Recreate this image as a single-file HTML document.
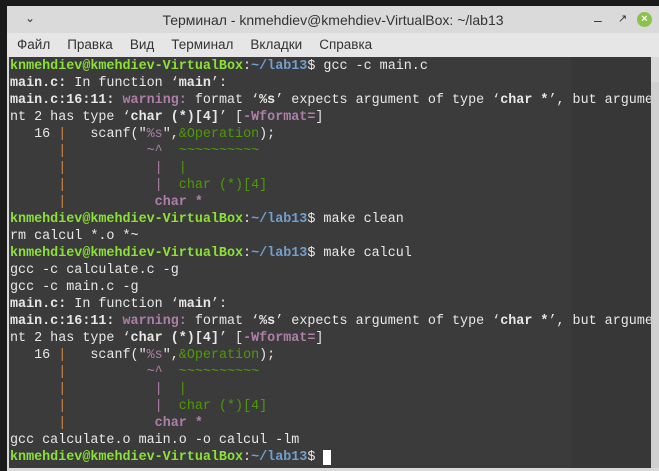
<!DOCTYPE html>
<html><head><meta charset="utf-8"><style>
body{margin:0;width:659px;height:471px;background:#1a1a1a;overflow:hidden;position:relative;font-family:"Liberation Sans",sans-serif}
#win{position:absolute;left:7px;top:6px;width:652px;height:465px;background:#d9d9d9}
#title{position:absolute;left:0;top:0;width:652px;height:27px;background:#dadada;font-size:14px;color:#333;text-align:center;line-height:28px}
#menu{position:absolute;left:0;top:27px;width:652px;height:24px;background:#e6e6e6;font-size:13.5px;color:#333;line-height:24px}
#menu span{margin-left:10px;margin-right:7px}
#term{position:absolute;left:2px;top:51px;width:642px;height:411px;background:#3b3b3b;overflow:hidden}
#side{position:absolute;left:562px;top:0;width:80px;height:411px;background:#373737}
#sb{position:absolute;left:644px;top:76px;width:8px;height:386px;background:#d0d0d0}
pre{position:absolute;left:1px;top:1px;margin:0;font-family:"Liberation Mono",monospace;font-size:13.4px;line-height:17px;color:#e8e8e8;white-space:pre}
.g{color:#8ae234;font-weight:bold}.b{color:#729fcf;font-weight:bold}.w{font-weight:bold}
.p{color:#ad7fa8;font-weight:bold}.pp{color:#ad7fa8}.o{color:#d0884a}.f{color:#4e9a06}
.cur{background:#fff;color:#fff}
</style></head><body>
<div id="win">
<div id="title"><span style="position:absolute;left:18px;top:-2px;font-size:12px">&#8964;</span>Терминал - knmehdiev@kmehdiev-VirtualBox: ~/lab13
<span style="position:absolute;left:587px;top:0">–</span>
<span style="position:absolute;left:611px;top:-1px;font-size:11px">&#8599;</span>
<span style="position:absolute;left:630px;top:6px;width:15px;height:15px;border-radius:50%;background:#8bc34a;color:#fff;font-size:11px;line-height:15px;font-weight:bold">×</span></div>
<div id="menu"><span>Файл</span><span>Правка</span><span>Вид</span><span>Терминал</span><span>Вкладки</span><span>Справка</span></div>
<div id="term"><div id="side"></div>
<pre><span class="g">knmehdiev@kmehdiev-VirtualBox</span>:<span class="b">~/lab13</span>$ gcc -c main.c
<span class="w">main.c:</span> In function ‘<span class="w">main</span>’:
<span class="w">main.c:16:11:</span> <span class="p">warning: </span>format ‘<span class="w">%s</span>’ expects argument of type ‘<span class="w">char *</span>’, but argume
nt 2 has type ‘<span class="w">char (*)[4]</span>’ [<span class="p">-Wformat=</span>]
   16 <span class="o">|</span>   scanf("<span class="pp">%s</span>",<span class="f">&amp;Operation</span>);
      <span class="o">|</span>          <span class="pp">~^</span>  <span class="f">~~~~~~~~~~</span>
      <span class="o">|</span>           <span class="pp">|</span>  <span class="f">|</span>
      <span class="o">|</span>           <span class="pp">|</span>  <span class="f">char (*)[4]</span>
      <span class="o">|</span>           <span class="p">char *</span>
<span class="g">knmehdiev@kmehdiev-VirtualBox</span>:<span class="b">~/lab13</span>$ make clean
rm calcul *.o *~
<span class="g">knmehdiev@kmehdiev-VirtualBox</span>:<span class="b">~/lab13</span>$ make calcul
gcc -c calculate.c -g
gcc -c main.c -g
<span class="w">main.c:</span> In function ‘<span class="w">main</span>’:
<span class="w">main.c:16:11:</span> <span class="p">warning: </span>format ‘<span class="w">%s</span>’ expects argument of type ‘<span class="w">char *</span>’, but argume
nt 2 has type ‘<span class="w">char (*)[4]</span>’ [<span class="p">-Wformat=</span>]
   16 <span class="o">|</span>   scanf("<span class="pp">%s</span>",<span class="f">&amp;Operation</span>);
      <span class="o">|</span>          <span class="pp">~^</span>  <span class="f">~~~~~~~~~~</span>
      <span class="o">|</span>           <span class="pp">|</span>  <span class="f">|</span>
      <span class="o">|</span>           <span class="pp">|</span>  <span class="f">char (*)[4]</span>
      <span class="o">|</span>           <span class="p">char *</span>
gcc calculate.o main.o -o calcul -lm
<span class="g">knmehdiev@kmehdiev-VirtualBox</span>:<span class="b">~/lab13</span>$ <span class="cur"> </span></pre>
</div>
<div id="sb"></div>
</div>
</body></html>
